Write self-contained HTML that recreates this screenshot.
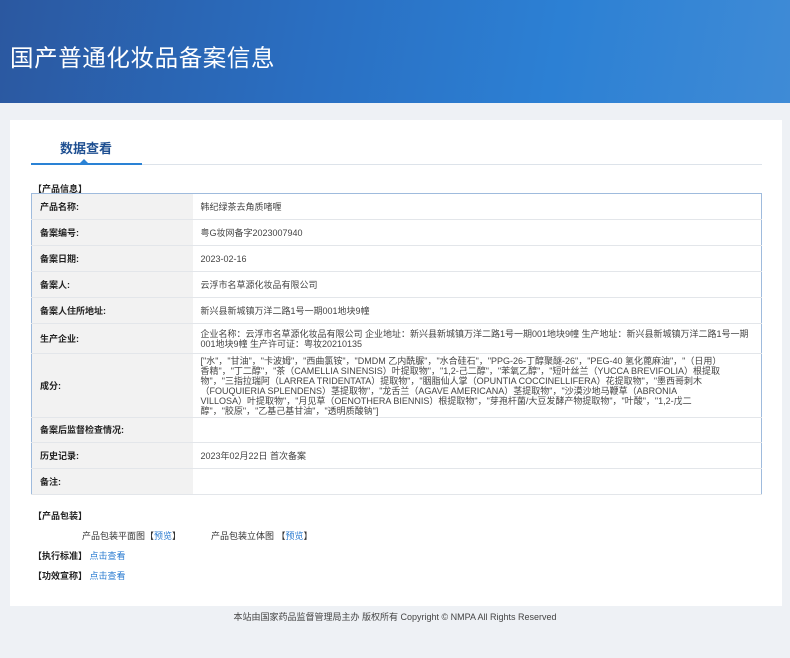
<!DOCTYPE html>
<html><head><meta charset="utf-8"><style>
*{margin:0;padding:0;box-sizing:border-box}
body{width:790px;height:658px;background:#eef1f5;font-family:"Liberation Sans","Noto Sans CJK SC",sans-serif;position:relative;overflow:hidden;color:#333}
.hd{position:absolute;left:0;top:0;width:790px;height:103px;background:linear-gradient(100deg,#2b58a0 0%,#2a6fc2 40%,#2c80d4 70%,#3f8bd6 100%)}
.hd h1{position:absolute;left:10px;top:39px;font-size:23.5px;font-weight:normal;color:#fff;letter-spacing:0.6px}
.panel{position:absolute;left:10px;top:120px;width:772px;height:486px;background:#fff}
.tab{position:absolute;left:60px;top:138px;font-size:13px;color:#1e4f91;font-weight:bold}
.ln{position:absolute;left:31px;top:164px;width:731px;height:1px;background:#dde3ea}
.lb{position:absolute;left:31px;top:163px;width:111px;height:2px;background:#2a82d5}
.tri{position:absolute;left:80px;top:159px;border:4px solid transparent;border-bottom-color:#2a82d5;border-top:0}
.sec{position:absolute;font-size:9px;font-weight:bold;color:#222}
table{position:absolute;left:31px;top:193px;width:731px;border-collapse:collapse;border:1px solid #9fbbdd;font-size:9px}
td{border-bottom:1px solid #e3e6ea;padding:0 8px;vertical-align:middle;line-height:10px}
td.l{width:161px;background:#f2f2f2;font-weight:bold;color:#222}
td.v{color:#444}
a{color:#2a7bd0;text-decoration:none}
.ft{position:absolute;left:0;width:790px;top:610px;text-align:center;font-size:9px;color:#444}
.s{position:absolute;font-size:9px;color:#333}
</style></head><body>
<div class="hd"><h1>国产普通化妆品备案信息</h1></div>
<div class="panel"></div>
<div class="tab">数据查看</div>
<div class="ln"></div><div class="lb"></div><div class="tri"></div>
<div class="sec" style="left:33px;top:182px">【产品信息】</div>
<table>
<tr style="height:26px"><td class="l">产品名称:</td><td class="v">韩纪绿茶去角质啫喱</td></tr>
<tr style="height:26px"><td class="l">备案编号:</td><td class="v">粤G妆网备字2023007940</td></tr>
<tr style="height:26px"><td class="l">备案日期:</td><td class="v">2023-02-16</td></tr>
<tr style="height:26px"><td class="l">备案人:</td><td class="v">云浮市名草源化妆品有限公司</td></tr>
<tr style="height:26px"><td class="l">备案人住所地址:</td><td class="v">新兴县新城镇万洋二路1号一期001地块9幢</td></tr>
<tr style="height:30px"><td class="l">生产企业:</td><td class="v">企业名称：云浮市名草源化妆品有限公司 企业地址：新兴县新城镇万洋二路1号一期001地块9幢 生产地址：新兴县新城镇万洋二路1号一期001地块9幢 生产许可证：粤妆20210135</td></tr>
<tr style="height:64px"><td class="l">成分:</td><td class="v" style="padding-right:40px">["水"，"甘油"，"卡波姆"，"西曲氯铵"，"DMDM 乙内酰脲"，"水合硅石"，"PPG-26-丁醇聚醚-26"，"PEG-40 氢化蓖麻油"，"（日用）香精"，"丁二醇"，"茶（CAMELLIA SINENSIS）叶提取物"，"1,2-己二醇"，"苯氧乙醇"，"短叶丝兰（YUCCA BREVIFOLIA）根提取物"，"三指拉瑞阿（LARREA TRIDENTATA）提取物"，"胭脂仙人掌（OPUNTIA COCCINELLIFERA）花提取物"，"墨西哥刺木（FOUQUIERIA SPLENDENS）茎提取物"，"龙舌兰（AGAVE AMERICANA）茎提取物"，"沙漠沙地马鞭草（ABRONIA VILLOSA）叶提取物"，"月见草（OENOTHERA BIENNIS）根提取物"，"芽孢杆菌/大豆发酵产物提取物"，"叶酸"，"1,2-戊二醇"，"胶原"，"乙基己基甘油"，"透明质酸钠"]</td></tr>
<tr style="height:25px"><td class="l">备案后监督检查情况:</td><td class="v"></td></tr>
<tr style="height:26px"><td class="l">历史记录:</td><td class="v">2023年02月22日 首次备案</td></tr>
<tr style="height:26px"><td class="l">备注:</td><td class="v"></td></tr>
</table>
<div class="sec" style="left:33px;top:509px">【产品包装】</div>
<div class="s" style="left:82px;top:529px">产品包装平面图【<a>预览</a>】</div>
<div class="s" style="left:211px;top:529px">产品包装立体图 【<a>预览</a>】</div>
<div class="sec" style="left:33px;top:549px">【执行标准】 <a style="font-weight:normal">点击查看</a></div>
<div class="sec" style="left:33px;top:569px">【功效宣称】 <a style="font-weight:normal">点击查看</a></div>
<div class="ft">本站由国家药品监督管理局主办 版权所有 Copyright © NMPA All Rights Reserved</div>
</body></html>
